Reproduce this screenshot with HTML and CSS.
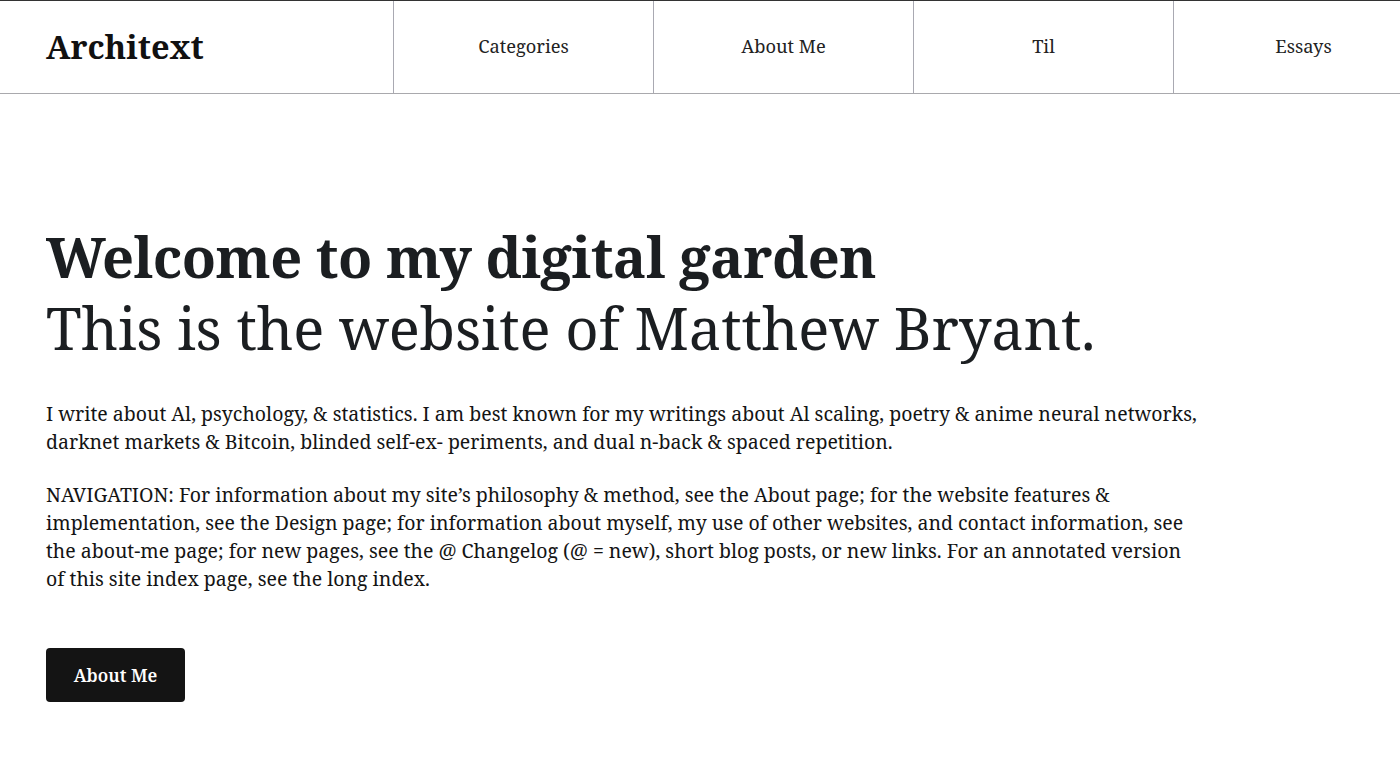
FILE: index.html
```html
<!DOCTYPE html>
<html lang="en">
<head>
<meta charset="utf-8">
<title>Architext</title>
<link rel="stylesheet" href="styles.css">
</head>
<body>
<header class="site-header">
  <a class="logo" href="#">Architext</a>
  <nav class="main-nav">
    <a class="nav-item" href="#">Categories</a>
    <a class="nav-item" href="#">About Me</a>
    <a class="nav-item" href="#">Til</a>
    <a class="nav-item" href="#">Essays</a>
  </nav>
</header>
<main class="hero">
  <h1 class="hero-title">
    <span class="hero-title-strong">Welcome to my digital garden</span>
    <span class="hero-title-light">This is the website of Matthew Bryant.</span>
  </h1>
  <div class="hero-text">
    <p>I write about Al, psychology, &amp; statistics. I am best known for my writings about Al scaling, poetry &amp; anime neural networks, darknet markets &amp; Bitcoin, blinded self-ex- periments, and dual n-back &amp; spaced repetition.</p>
    <p>NAVIGATION: For information about my site’s philosophy &amp; method, see the About page; for the website features &amp; implementation, see the Design page; for information about myself, my use of other websites, and contact information, see the about-me page; for new pages, see the @ Changelog (@ = new), short blog posts, or new links. For an annotated version of this site index page, see the long index.</p>
  </div>
  <a class="btn" href="#">About Me</a>
</main>
</body>
</html>
```
FILE: styles.css
```css
html, body {
  margin: 0;
  padding: 0;
  background: #fff;
}
body {
  font-family: "Noto Serif", "DejaVu Serif", serif;
  color: #1b1e21;
  overflow: hidden;
}
a { color: inherit; text-decoration: none; }

.site-header {
  display: flex;
  height: 92px;
  border-top: 1px solid #333;
  border-bottom: 1px solid #a9a9ad;
  overflow: hidden;
}
.logo {
  flex: 0 0 347px;
  padding-left: 46px;
  display: flex;
  align-items: center;
  font-size: 32.5px;
  font-weight: 700;
  color: #111;
  padding-bottom: 2px;
}
.main-nav {
  display: flex;
  flex-shrink: 0;
}
.nav-item {
  flex: 0 0 259px;
  border-left: 1px solid #a9a9b2;
  display: flex;
  align-items: center;
  justify-content: center;
  font-size: 18.3px;
  color: #222;
  padding-bottom: 4px;
}

.hero {
  padding: 126px 46px 0;
}
.hero-title {
  margin: 0;
  font-weight: 400;
  line-height: 72px;
  color: #1b1e21;
}
.hero-title span { display: block; white-space: nowrap; }
.hero-title-strong {
  font-weight: 700;
  font-size: 56px;
  letter-spacing: -0.5px;
}
.hero-title-light {
  font-weight: 400;
  font-size: 58px;
  letter-spacing: -0.2px;
}

.hero-text {
  max-width: 1154px;
  margin-top: 36px;
  font-size: 19.5px;
  line-height: 28px;
  color: #141414;
}
.hero-text p { margin: 0 0 25px; }

.btn {
  display: inline-flex;
  align-items: center;
  justify-content: center;
  margin-top: 30px;
  width: 139px;
  height: 54px;
  box-sizing: border-box;
  background: #141414;
  color: #fff;
  border-radius: 4px;
  font-size: 17.5px;
  font-weight: 600;
}
```
